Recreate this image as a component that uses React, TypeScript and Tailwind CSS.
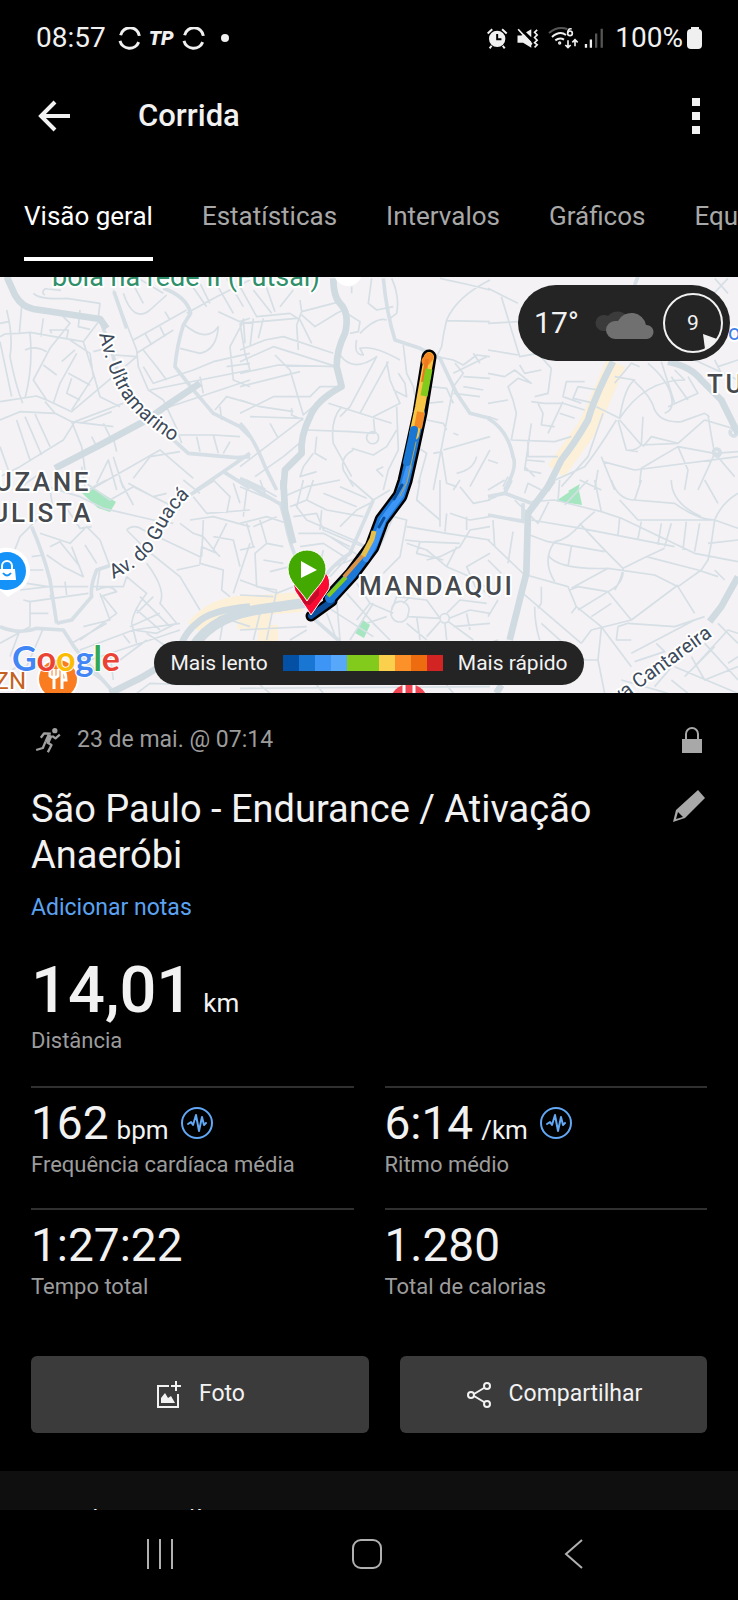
import React, { useState } from 'react';

const TABS = ['Visão geral', 'Estatísticas', 'Intervalos', 'Gráficos', 'Equipamento'];

const PACE_COLORS = [
  'bg-[#0450a4]', 'bg-[#1976d2]', 'bg-[#3d96f5]', 'bg-[#57a8fb]', 'bg-[#82cb1c]',
  'bg-[#82cb1c]', 'bg-[#fbd04c]', 'bg-[#fb9128]', 'bg-[#ee6c10]', 'bg-[#d32424]',
];

interface Stat {
  value: string;
  unit?: string;
  label: string;
  zones?: boolean;
}

const STATS: Stat[] = [
  { value: '162', unit: 'bpm', label: 'Frequência cardíaca média', zones: true },
  { value: '6:14', unit: '/km', label: 'Ritmo médio', zones: true },
  { value: '1:27:22', label: 'Tempo total' },
  { value: '1.280', label: 'Total de calorias' },
];

// The map is drawn in six tiles, three map units per pixel
interface Tile {
  at: string;
  minor: string;
  mid: string;
  major: string;
}

const TILES: Tile[] = [
  {
    at: 'translate(0 -7) scale(.3333)',
    minor:
      'M20 120Q40 200 30 260Q45 340 68 400M65 110L58 190L15 192L0 200M58 190L90 187L250 215L300 150M90 190Q100 290 75 385M0 160L25 155M0 215L35 380M0 395L110 378L145 392L215 425L410 260L345 255' +
      'M100 70Q120 90 200 85L300 100L295 140M135 75a9 9 0 1 1 8-18l40 4M240 120L235 170L270 178M180 130L210 160L150 235L100 330L140 390M130 145L122 200M155 190L150 180L205 180L200 205M210 210L270 250L280 320L215 420M250 215L280 310L300 380L360 410M230 250L180 340L160 400M205 310L270 345M215 325L200 370L240 390M130 285L170 315M75 240Q105 225 140 245M185 275L225 240M280 245L340 230' +
      'M0 450L60 425L165 430L215 455L245 530L255 600M50 450L90 570M75 440L125 555M105 432L150 530M135 395L165 430M0 620L60 590L190 510L225 455L370 400M240 460L270 450L335 425M215 455L340 470M310 460L330 500M275 500L290 530M340 505L350 545M0 530L25 600M50 660L120 610M165 620L185 660M245 590L255 650M290 640L325 570L350 660M340 560L370 655M270 660L480 540L580 625M400 625L450 560L540 545' +
      'M340 60L410 240L415 290L445 360L490 390L530 475L545 520M370 70Q400 160 450 120L500 75M390 25L430 100M410 22L490 70M400 210L560 120M410 250L520 180M435 190L455 225M480 170L495 200M495 125L510 150M430 240L470 290L500 330M430 290L460 340L580 300L640 275L750 250M555 165Q620 220 655 170Q650 240 600 250L540 235M560 130L650 80L750 30M600 40L630 100M640 25L700 130M680 25L730 110M560 25L620 110M655 125L720 155L750 145M730 155L690 230L700 330L750 350M680 290L750 280M720 160L735 250L750 300M600 320L610 370M450 360L750 300M480 420L750 330M645 420L680 380L750 400M540 495L640 495L720 500M590 500L600 545M640 495L655 550M690 515L670 550M660 410L665 450',
    mid: 'M300 147L340 260L370 360L430 440L520 510L565 550L710 563L750 560M490 55Q560 80 572 130L550 165Q530 230 525 290L580 360L640 430L720 470L750 500M590 660L670 605L750 550M670 605L750 655M342 65L380 175',
    major: 'M20 20L45 75Q65 110 100 117L300 147L320 175M165 595L310 520L440 450L510 400L600 340',
  },
  {
    at: 'translate(240 -7) scale(.3333)',
    minor:
      'M0 50L50 140L150 130L180 150L215 220M40 60L95 130M75 40L105 125M120 110L160 60M180 90L185 125L300 95M185 125L170 165L175 240M185 135L225 170L290 130L310 120M320 130L360 155L355 185L330 190M335 50L335 70M395 25L385 100L410 120L460 110M0 160L170 145M0 240L75 210L130 200L280 250M0 275L100 230L290 290M0 310L115 285L290 290M0 350L180 305M10 145L15 220M40 145L30 230M70 145L55 205M105 255L150 300L190 435L290 350M0 390L60 410L160 425M0 430L100 380L210 380L240 350L300 350M0 590L190 445M30 440L190 445M45 620L130 560L190 510M90 460L115 505M155 415L155 435L190 450' +
      'M360 190Q410 140 440 150M350 210Q340 255 370 255L360 235Q400 225 480 270M300 255Q340 310 410 260L330 410L300 440M445 275L360 430M460 360L500 380L495 340L475 310M265 400L360 430L455 460M440 275L450 330L480 400L400 440M305 410Q270 450 280 520L335 620M400 440L405 490M405 490L330 485L200 480M410 490a18 18 0 1 0 1 1M340 540Q300 560 310 600L340 650M335 535L400 555L440 530L470 480M430 590L410 600L430 620M220 550L190 590L180 620L230 605M230 500L225 550L260 570M470 410L475 540L445 600L430 660' +
      'M455 25Q480 80 470 130L450 145M490 225L500 310L520 350L530 400M560 330L530 390M570 350L620 355L640 400M750 30Q650 80 620 150Q610 190 605 230M600 25L690 45L750 60M620 152L750 155M605 230L590 260L640 270L670 285L710 255L750 260M645 280L670 310L640 350L580 660M640 310L740 260M670 320L750 325M700 250L720 280M670 350L730 360M640 370L720 380M560 450L610 460L620 480M640 490L655 495M560 400L610 395M610 540L750 500M580 550L605 545L620 640L650 650M650 610Q700 600 710 560M530 530L560 550L535 640M750 540L690 650',
    mid: 'M430 25Q440 130 465 210L540 235L600 265Q625 320 650 370L690 430L750 445M0 460Q40 500 75 590L110 660M0 625L75 660',
    major: 'M280 25Q280 80 300 100Q330 130 315 190Q290 240 290 290L305 350Q230 390 210 440Q180 500 185 550L135 600L130 660',
  },
  {
    at: 'translate(488 -7) scale(.3333)',
    minor:
      'M0 55L90 100M40 80L95 260L150 250L190 295L180 370L140 380M95 285L110 310L160 300M0 310L50 320L80 300L130 340L90 325L60 350L75 390L85 430L70 510L200 515L250 500M0 400L60 390M130 395L170 400L225 400L290 420M150 400L165 430L160 465L200 470M225 395L180 490M290 335L235 335L225 380L280 400M330 360L270 350L255 385L320 400M215 430L260 445M130 460L110 600L160 610M115 570L170 575M110 590L140 620M120 510L120 560L210 560M0 440L30 450M0 160L90 155M0 240L90 255' +
      'M380 340L430 280L455 290M345 430L300 560L220 650M385 450Q330 540 290 590L180 640M325 410L395 445Q410 350 440 330L380 320M440 335Q490 380 500 420Q520 460 580 455L650 430L665 440M390 450L415 540L450 545M480 280Q540 330 550 380Q560 420 530 430M395 445Q470 330 590 330L560 300M550 320L600 390M600 320L630 370L540 410M395 450L460 525L570 520L650 450M415 540Q440 545 460 525M455 640L460 595L570 530L680 550L750 545M570 520L490 500L465 530M465 440L460 525M340 560L380 660M345 575L440 600L750 560M570 530L600 600L590 660M660 435Q670 500 680 550L740 620M680 550L630 660M650 450L750 480M690 290L750 270M680 270L700 310M600 150L650 200M560 180L650 100L720 25M680 25L720 70M620 270L750 330M520 275L560 400M0 570L30 580M275 630L340 660M330 600L320 660M45 650L60 620',
    mid: 'M0 445Q60 480 75 560Q90 590 50 660M730 480a10 10 0 1 1-1 1M680 540a10 10 0 1 1-1 1M450 20L440 45',
    major: 'M375 275Q320 380 300 450Q260 520 220 570L175 660M540 275Q610 290 640 330L700 390L740 470L750 490',
  },
  {
    at: 'translate(0 203) scale(.3333)',
    minor:
      'M130 0L140 20L240 50L310 85L460 120L520 130M245 0L330 60L400 20L540 90M360 0L400 75M385 10L460 50L500 40M280 20L320 0M150 30L160 90M380 150Q400 130 430 150L600 230M380 150L440 210L540 290L600 390M570 120L640 110L750 140M540 130L580 160L610 170L650 220L605 200L600 250L670 270L665 330L690 350M610 120L605 230M680 130L640 210L660 230M640 170L700 180L720 260M750 190L700 340M530 270L600 255M580 50L620 100L750 90M640 0L690 50L680 100M700 10L720 70M740 30L730 110M550 0L600 40' +
      'M90 140L60 170L40 220M90 140L130 100M120 160L210 190L260 140L300 180L330 260M140 225L190 260L250 290L215 200M150 200L180 185L240 260M255 195L290 250M190 70L240 145L275 140M95 230L130 225M85 270L130 270M80 310L145 320L265 320M60 330L145 320M70 360L90 365L265 340M195 305L200 345M150 345L155 355M90 365L90 440M90 400L145 400M90 440L0 490M130 445L80 560M60 450L30 530' +
      'M300 265L290 330Q330 310 350 335L300 350M275 320L370 320L380 290M300 340L330 420L250 440M310 350L350 400L240 480M380 290L440 340Q400 390 395 430L410 490M440 250Q500 330 480 370L530 430M420 350L510 440M410 400L460 350M390 440L480 400M410 390L480 450M400 450L470 460L530 430M320 430L215 490M240 510L400 450L540 430M270 540L540 450M360 540L440 480M440 460L500 500M370 465L390 490M330 520L340 600M250 560L330 620M640 400L700 390M600 480L660 410L750 440M670 420L660 480M0 600L50 560L110 560M410 640L450 610L600 615',
    mid: 'M95 140Q130 220 150 300L170 430M0 440Q60 465 110 445L190 450L225 505L255 540L330 625L350 640M335 255L290 270Q270 320 275 350L215 420L170 430M420 600L340 630M570 45L640 0',
    major: 'M750 380Q630 390 590 430Q550 460 530 530L420 595L330 640',
  },
  {
    at: 'translate(240 203) scale(.3333)',
    minor:
      'M0 20L120 70M20 0L110 50M60 0L75 40M130 50L200 20L300 0M150 80L200 60L260 90L370 110M190 0L170 80L200 120L340 180L380 200M160 110L230 100L250 150L370 200M175 160L250 160L330 200M300 140L350 90L390 70M270 170L360 230L280 260M300 20L380 55M250 40L350 80M330 0L400 60L450 30M180 200L250 190L320 235L270 290M250 210L230 300M40 140L110 110M0 130L80 110L140 130M20 130L40 200M60 120L80 190L45 220L50 320L110 330M80 190L130 200M70 240L130 250M90 275L150 260M0 210L45 200M0 300L110 340L160 320M0 345L100 350M200 60L220 0M245 90L240 150' +
      'M420 200L460 110L500 120L480 230L430 280M500 140L620 160L750 180M495 180L540 185L660 190M540 0L530 60L600 120M600 0L600 140M630 100L690 120L750 110M620 100L615 155M660 20L700 70L750 60M660 0L640 30M680 110L680 150M750 140L690 150L660 200L600 230L560 240M500 190L560 210L620 260L690 290M650 200L620 260M540 185L530 220L610 240M750 220L680 260L710 330M690 290L750 330' +
      'M455 390a26 26 0 1 0 50 10a26 26 0 1 0-50-10M600 415a14 14 0 1 0 28 0a14 14 0 1 0-28 0M350 310L390 370L460 400M320 340L400 430L450 480M390 370L350 420M260 380L400 470M290 360L300 480M400 370L330 480M380 430L440 410M505 410L600 415L560 360L470 350L455 390M500 430L560 480M530 410L540 480M490 370L510 350M628 415L690 390L750 400M620 400L660 360L740 370M615 430L620 480M625 425L700 480M600 425L560 470M640 440L750 430M680 400L690 450M730 330L750 350M260 400L290 480M200 450L150 480M0 450L200 440M60 400L40 480M110 330L80 480M0 625L750 620M60 615L90 640M230 615L250 640M620 615L640 640',
    mid: 'M120 65L135 120Q150 200 180 260M225 420L300 485M0 0L125 75M230 320Q280 250 330 220L400 60',
    major: 'M130 0L135 90L160 190M0 385Q100 395 160 375L220 350',
  },
  {
    at: 'translate(488 203) scale(.3333)',
    minor:
      'M130 65L200 60L340 95L400 115L620 220L750 245M130 120L280 145L560 200M125 165L180 185L350 215M320 0L340 95M215 0L210 60M230 75L300 0M280 130Q240 180 200 185Q160 240 200 305M250 200L240 260M180 225Q210 270 360 265L500 285L570 320L620 400M280 130L320 95M275 130Q330 190 360 220L405 265L475 230L630 270L690 290M405 265Q410 310 360 335L270 320L245 330M360 335L430 420M360 335L270 390M250 325L360 265M475 230L530 205M405 265Q400 300 380 330M115 285L240 320L265 380L340 440L430 560M185 60L150 130L80 60M160 320L160 370L150 385M105 340L280 490M140 380Q140 430 155 480M265 380L250 400M430 420L310 450L280 490M430 420L570 315M310 410L370 370M340 445L330 540L350 640M570 320L640 270L660 240L670 190L680 120' +
      'M370 0Q390 60 440 60L560 70Q630 120 680 120L750 145M440 60L460 0M395 60L450 120L680 120M550 0Q550 70 640 110M395 115L390 165M460 125L450 175M520 130L510 195M550 130L530 200M595 125L585 210M635 130L620 215M680 120Q700 70 750 40M650 0L690 70M660 190L750 180M680 270L710 300M160 430L260 520L290 540M390 440L385 480L430 480M330 540L260 540M390 440L420 430L560 440L650 410M430 520L620 420M505 490L530 515L440 545M690 430L750 490M620 560L720 450L750 460M560 560L750 640M500 620L620 480M550 600L600 640M610 530L650 600L750 560M590 590L680 500M650 490L750 600M400 600L540 640M720 550L750 530M0 180L110 285M15 120L20 200M75 155L60 250M0 240L40 280M0 30L50 0M110 40L120 10L160 30M0 60L25 50M30 360L0 410M0 490L30 480',
    mid: 'M0 50L50 40L130 70M50 40L70 0M0 105L110 125M105 70L105 120',
    major: 'M195 0L120 100L115 280L95 360L65 480M750 290L700 380L665 425M40 615L25 640',
  },
];

const ActivityMap: React.FC = () => (
  <svg viewBox="0 0 738 416" preserveAspectRatio="xMidYMid slice" className="block w-full bg-[#f4f2f4]" fontFamily="Roboto, sans-serif" aria-label="Mapa do percurso">
    {/* Commercial areas */}
    <g fill="none" stroke="#fcf0d8" strokeWidth="20">
      <path d="M616 86L588 150L556 194" />
      <path d="M196 352Q215 326 262 328L302 325M238 342L270 344M268 348v38" />
    </g>
    {/* Parks */}
    <g fill="#a5e6c0">
      <path d="M82 216L92 210L116 225L110 235L98 231Z" />
      <path d="M556 224L578 209L582 228Z" />
      <path d="M355 356L363 343L370 348L364 361Z" />
      <path d="M568 214L580 207L576 219Z" />
    </g>
    {TILES.map((tile) => (
      <g key={tile.at} transform={tile.at} fill="none" stroke="#d5dfe5" strokeLinejoin="round">
        <path d={tile.minor} strokeWidth="5" />
        <path d={tile.mid} strokeWidth="11" />
        <path d={tile.major} strokeWidth="20" stroke="#cfdae1" />
      </g>
    ))}
    <path d="M188 380Q205 340 262 332L311 325" fill="none" stroke="#cfdae1" strokeWidth="10" />

    {/* Route, coloured by pace */}
    <g fill="none" strokeLinecap="round" strokeLinejoin="round">
      <path d="M311 339L332 324" stroke="#000" strokeWidth="11" />
      <path d="M330 321L352 297L372 270L382 243L400 219L405 204L412 173L420 136L429 80" stroke="#000" strokeWidth="15" />
      <path d="M311 339L332 324" stroke="#0b4f9c" strokeWidth="6" />
      <path d="M330 321L352 297L372 270L382 243L400 219L405 204L412 173L420 136" stroke="#1c78d6" strokeWidth="10" />
      <path d="M366 282L375 266L383 243L401 218L409 190" stroke="#3d96f5" strokeWidth="6" />
      <path d="M379 250L384 241M394 222L402 208" stroke="#0b4f9c" strokeWidth="3" />
      <path d="M414 158L420 130L429 80" stroke="#f8c646" strokeWidth="10" />
      <path d="M426 84L429 80" stroke="#f58a25" strokeWidth="9" />
      <g strokeLinecap="butt">
        <path d="M423 105L427 82" stroke="#ee7a20" strokeWidth="4" />
        <path d="M424 119L429 92" stroke="#82cb1c" strokeWidth="7" />
        <path d="M418 151L421 135" stroke="#f58a25" strokeWidth="8" />
        <path d="M328 319L346 300" stroke="#82cb1c" strokeWidth="4" />
        <path d="M344 300L364 277" stroke="#d99448" strokeWidth="4" />
        <path d="M363 279L372 262L374 254" stroke="#e6c04a" strokeWidth="5" />
      </g>
      <path d="M414 153L407 185" stroke="#1976d2" strokeWidth="8" />
      <path d="M416 165L407 205L400 219" stroke="#b9a44c" strokeWidth="1" />
    </g>

    {/* Start and finish pins */}
    <path d="M311 338L295 314Q288 292 310 290Q333 292 329 312Z" fill="#fb0a32" stroke="#fff" />
    <path d="M296 311L307 325L319 311L319 318L310 328L304 327Z" fill="#8c0b20" opacity=".5" />
    <path d="M307 324C300 312 288 305 288 292a19 19 0 0 1 38 0C326 305 314 312 307 324Z" fill="#43a800" stroke="#fff" />
    <path d="M301 284L317 293L301 301Z" fill="#fff" />

    {/* Places */}
    <circle cx="348" cy="-5" r="14" fill="#fff" />
    <path d="M-16 294a23 23 0 1 1 37 18Q15 315 8 320Q-1 314-16 294Z" fill="#fff" />
    <circle cx="7" cy="294" r="19" fill="#1492f8" />
    <path d="M-1 292H15L16 303H-2Z" fill="#fff" />
    <path d="M2 293v-4a5 5 0 0 1 10 0v4" fill="none" stroke="#fff" strokeWidth="2" />
    <path d="M3 296q4 5 8 0" fill="none" stroke="#1492f8" strokeWidth="2" />
    <circle cx="58" cy="402" r="21" fill="#fff" />
    <circle cx="58" cy="402" r="19" fill="#f97c20" />
    <path d="M50 392v7q4 4 8 0v-7M54 392v20M62 412v-19q4 1 4 10h-3" fill="none" stroke="#fff" strokeWidth="3" />
    <circle cx="409" cy="426" r="19" fill="#f04452" />
    <path d="M404 408v10M414 408v10" stroke="#fff" strokeWidth="3" />

    <defs>
      <path id="ultramarino" d="M99 57Q112 112 134 134T180 168" />
      <path id="guaca" d="M113 302Q148 287 162 257T204 207" />
      <path id="cantareira" d="M597 442L744 336" />
    </defs>
    <g stroke="#fff" strokeWidth="4" paintOrder="stroke" strokeLinejoin="round">
      <text x="52" y="9" fontSize="27" fill="#2f8f6a">bola na rede II (Futsal)</text>
      <g fill="#3c4a5a" fontSize="20">
        <text><textPath href="#ultramarino">Av. Ultramarino</textPath></text>
        <text><textPath href="#guaca">Av. do Guacá</textPath></text>
        <text><textPath href="#cantareira">Nova Cantareira</textPath></text>
      </g>
      <g fill="#45494e" fontSize="26" fontWeight="500" className="tracking-widest">
        <text x="91" y="214" textAnchor="end">SUZANE</text>
        <text x="93" y="245" textAnchor="end">PAULISTA</text>
        <text x="359" y="318">MANDAQUI</text>
        <text x="707" y="116">TUCURUVI</text>
      </g>
      <text x="728" y="63" fontSize="22" fill="#3f7fe8">ocan</text>
      <text x="26" y="412" fontSize="24" textAnchor="end" fill="#c5621d">ZN</text>
      <text x="12" y="394" fontSize="34" fontWeight="700" fontFamily="Lato, sans-serif" strokeWidth="2">
        <tspan fill="#4285f4">G</tspan>
        <tspan fill="#ea4335">o</tspan>
        <tspan fill="#fbbc05">o</tspan>
        <tspan fill="#4285f4">g</tspan>
        <tspan fill="#34a853">l</tspan>
        <tspan fill="#ea4335">e</tspan>
      </text>
    </g>
  </svg>
);

const SyncIcon: React.FC = () => (
  <svg viewBox="352 78 68 70" className="h-[23px] w-[23px]" fill="none" stroke="currentColor" strokeWidth="9">
    <path d="M359 103A29 29 0 0 1 416 105M357 120A30 30 0 0 0 414 124" />
  </svg>
);

const StatusBar: React.FC = () => (
  <div className="flex h-[72px] items-center justify-between pt-1 pr-9 pl-9 text-[#f0f0f0]">
    <div className="flex items-center gap-2">
      <span className="mr-1 text-[28px] leading-8">08:57</span>
      <SyncIcon />
      <span className="text-xl leading-6 font-black italic">TP</span>
      <SyncIcon />
      <span className="ml-2 h-2 w-2 rounded-full bg-current" />
    </div>
    <div className="flex items-center">
      <svg viewBox="356 80 64 64" className="mr-2 h-[21px] w-[21px]">
        <circle cx="387" cy="113" r="25" fill="currentColor" />
        <path d="M358 97L372 84M416 97L402 84M370 134L364 142M404 134L410 142" stroke="currentColor" strokeWidth="6" />
        <path d="M387 98V114H400" fill="none" stroke="#000" strokeWidth="6" />
      </svg>
      <svg viewBox="448 80 68 64" className="mr-2 h-[21px] w-6">
        <path d="M450 103H462L469 98L492 122V140L467 125H450ZM476 93L492 84V108Z" fill="currentColor" />
        <path d="M452 84L494 130" stroke="currentColor" strokeWidth="5" />
        <path d="M510 86L502 93L510 101L502 109L510 117L502 125L510 131L502 139" fill="none" stroke="currentColor" strokeWidth="5" />
      </svg>
      <svg viewBox="540 78 96 70" className="mr-1 h-6 w-8" fill="none" stroke="currentColor" strokeWidth="6">
        <path d="M543 98Q568 76 598 86" stroke="#555" />
        <path d="M552 110Q575 90 594 104M562 120Q575 110 588 118" />
        <circle cx="575" cy="128" r="2" />
        <path d="M611 86Q600 82 599 98" strokeWidth="5" />
        <circle cx="606" cy="99" r="7" strokeWidth="5" />
        <path d="M600 120V142M592 134L600 142L608 134M621 138V118M613 126L621 118L629 126" strokeWidth="5" />
      </svg>
      <svg viewBox="648 80 64 64" className="mr-[10px] h-[21px] w-[21px]" strokeWidth="7">
        <path d="M654 129V140M669 115V140" stroke="currentColor" />
        <path d="M685 97V140M702 82V140" stroke="#555" />
      </svg>
      <span className="text-[28px] leading-8">100%</span>
      <span className="ml-1 flex flex-col items-center">
        <span className="h-[2px] w-2 bg-current" />
        <span className="h-5 w-[15px] rounded-[4px] bg-current" />
      </span>
    </div>
  </div>
);

const ZonesIcon: React.FC = () => (
  <svg viewBox="0 0 32 32" className="h-8 w-8 text-[#62a8f5]" fill="none" stroke="currentColor" strokeWidth="2" strokeLinejoin="round" strokeLinecap="round">
    <circle cx="16" cy="16" r="15" />
    <path d="M7 17L10 15L12 18L15 8L18 24L21 10L23 18L25 16" />
  </svg>
);

export default function App() {
  const [activeTab, setActiveTab] = useState(TABS[0]);

  return (
    <div className="flex min-h-screen flex-col overflow-x-hidden bg-black font-[Roboto,sans-serif] text-[#f2f2f2]">
      <StatusBar />

      <header className="flex h-[88px] items-center px-9">
        <button aria-label="Voltar" className="flex h-9 w-9 items-center">
          <svg viewBox="0 0 36 36" className="h-9 w-9" fill="none" stroke="currentColor" strokeWidth="4">
            <path d="M19 4L5 18L19 32M4 18H34" />
          </svg>
        </button>
        <h1 className="ml-[66px] flex-1 text-[31px] leading-9 font-medium">Corrida</h1>
        <button aria-label="Mais opções" className="flex flex-col gap-[6px] pr-[2px] pl-2">
          <span className="h-2 w-2 bg-current" />
          <span className="h-2 w-2 bg-current" />
          <span className="h-2 w-2 bg-current" />
        </button>
      </header>

      <nav className="flex gap-[49px] overflow-hidden pt-10 pb-4 pl-6">
        {TABS.map((tab) => (
          <button
            key={tab}
            onClick={() => setActiveTab(tab)}
            className={`shrink-0 border-b-4 pb-6 text-[26px] leading-[33px] whitespace-nowrap ${
              tab === activeTab ? 'border-white text-white' : 'border-transparent text-[#a8a8a8]'
            }`}
          >
            {tab}
          </button>
        ))}
      </nav>

      <section className="relative">
        <ActivityMap />
        {/* Weather */}
        <div className="absolute top-2 right-2 flex h-[76px] items-center rounded-full bg-[#242424] pr-[7px] pl-4">
          <span className="text-[30px] leading-9">17°</span>
          <svg viewBox="0 0 60 34" className="mr-2 ml-4 h-[34px] w-[60px]">
            <path d="M8 25a8 8 0 0 1 1-16q3 0 4 1a12 11 0 0 1 20 1v14Z" fill="#3b3b3b" />
            <path d="M20 33a9 9 0 0 1 0-18h3a15 15 0 0 1 28 4a7 7 0 0 1 1 14Z" fill="#707070" />
          </svg>
          <svg viewBox="0 0 60 60" className="h-[60px] w-[60px]">
            <circle cx="30" cy="30" r="29" fill="none" stroke="#f2f2f2" strokeWidth="2" />
            <path d="M40 41L54 46Q50 53 42 56Z" fill="#f2f2f2" />
            <text x="30" y="37" fontSize="21" textAnchor="middle" fill="#f2f2f2">9</text>
          </svg>
        </div>
        {/* Pace legend */}
        <div className="absolute inset-x-0 bottom-2 flex justify-center">
          <div className="flex h-11 items-center gap-[15px] rounded-full bg-[#242424] px-4 text-[21px] leading-6 whitespace-nowrap">
            <span>Mais lento</span>
            <div className="flex">
              {PACE_COLORS.map((color, idx) => (
                <span key={idx} className={`h-4 w-4 ${color}`} />
              ))}
            </div>
            <span>Mais rápido</span>
          </div>
        </div>
      </section>

      <main className="px-[31px] pt-[33px]">
        <div className="flex items-center">
          <svg viewBox="103 78 77 78" className="ml-1 h-[26px] w-[26px] text-[#a0a0a0]" fill="none" stroke="currentColor" strokeWidth="7" strokeLinejoin="round">
            <circle cx="162" cy="89" r="8" fill="currentColor" stroke="none" />
            <path d="M148 102L138 124" strokeWidth="16" />
            <path d="M154 105L164 112L177 101M150 98L130 97L120 110M138 124L152 132L141 154M134 122L126 141L106 147" />
          </svg>
          <span className="ml-4 flex-1 text-[23px] leading-7 text-[#9c9c9c]">23 de mai. @ 07:14</span>
          <svg viewBox="0 0 22 28" className="mr-1 h-7 w-[22px] text-[#a8a8a8]">
            <path d="M1 13H21V27H1Z" fill="currentColor" />
            <path d="M5 14V8a6 6 0 0 1 12 0v6" fill="none" stroke="currentColor" strokeWidth="2" />
          </svg>
        </div>

        <div className="mt-8 flex items-start">
          <h2 className="flex-1 pr-16 text-[38px] leading-[46px]">São Paulo - Endurance / Ativação Anaeróbi</h2>
          <button aria-label="Editar título" className="mt-1 mr-[2px] text-[#a8a8a8]">
            <svg viewBox="0 0 32 32" className="h-8 w-8">
              <path d="M25 0L32 8L12 28L0 32L3 20ZM5 22L3 29L10 27Z" fill="currentColor" fillRule="evenodd" />
            </svg>
          </button>
        </div>
        <a href="#notas" className="mt-4 inline-block text-[23px] leading-7 text-[#5ba3f2]">Adicionar notas</a>

        <div className="mt-8 flex items-baseline gap-[10px]">
          <span className="text-[65px] leading-[72px] font-medium">14,01</span>
          <span className="text-[26px]">km</span>
        </div>
        <p className="text-[22px] leading-[30px] text-[#9c9c9c]">Distância</p>

        <div className="mt-[30px] grid grid-cols-2 gap-x-[31px]">
          {STATS.map((stat) => (
            <div key={stat.label} className="border-t-2 border-[#303030] pt-2 pb-7">
              <div className="flex h-[54px] items-center">
                <div className="flex items-baseline gap-2">
                  <span className="text-[46px] leading-[54px]">{stat.value}</span>
                  {stat.unit && <span className="text-[26px]">{stat.unit}</span>}
                </div>
                {stat.zones && <span className="ml-3"><ZonesIcon /></span>}
              </div>
              <p className="text-[22px] leading-[30px] text-[#9c9c9c]">{stat.label}</p>
            </div>
          ))}
        </div>

        <div className="mt-[26px] grid grid-cols-[11fr_10fr] gap-[31px] text-[23px]">
          <button className="flex h-[77px] items-center justify-center gap-4 rounded-md bg-[#3b3b3b]">
            <svg viewBox="0 0 28 28" className="h-7 w-7" fill="none" stroke="currentColor" strokeWidth="2">
              <path d="M14 5H3V26H23V13M21 0V10M16 5H26" />
              <path d="M6 22V17L10 12L13 17L16 15L20 22Z" fill="currentColor" stroke="none" />
            </svg>
            Foto
          </button>
          <button className="flex h-[77px] items-center justify-center gap-4 rounded-md bg-[#3b3b3b]">
            <svg viewBox="0 0 28 28" className="h-7 w-7" fill="none" stroke="currentColor" strokeWidth="2">
              <circle cx="6" cy="14" r="3" />
              <circle cx="22" cy="5" r="3" />
              <circle cx="22" cy="23" r="3" />
              <path d="M9 13L19 7M9 15L19 21" />
            </svg>
            Compartilhar
          </button>
        </div>
      </main>

      {/* Next card, cut off by the navigation bar */}
      <section className="mt-[38px] h-[39px] overflow-hidden bg-[#0f0f0f] px-[31px] pt-[35px]">
        <h3 className="text-[23px] leading-7">Frequência cardíaca</h3>
      </section>

      <footer className="grid h-[91px] grid-cols-3 items-center pr-[60px] pb-1 pl-14 text-[#b0b0b0]">
        <button aria-label="Recentes" className="flex justify-center">
          <svg viewBox="0 0 30 30" className="h-[30px] w-[30px]" stroke="currentColor" strokeWidth="2">
            <path d="M3 0V30M15 0V30M27 0V30" />
          </svg>
        </button>
        <button aria-label="Início" className="flex justify-center">
          <svg viewBox="0 0 30 30" className="h-[30px] w-[30px]" fill="none" stroke="currentColor" strokeWidth="2">
            <rect x="1" y="1" width="28" height="28" rx="8" />
          </svg>
        </button>
        <button aria-label="Voltar ao anterior" className="flex justify-center">
          <svg viewBox="0 0 30 30" className="h-[30px] w-[30px]" fill="none" stroke="currentColor" strokeWidth="2">
            <path d="M23 1L7 15L23 29" />
          </svg>
        </button>
      </footer>
    </div>
  );
}
